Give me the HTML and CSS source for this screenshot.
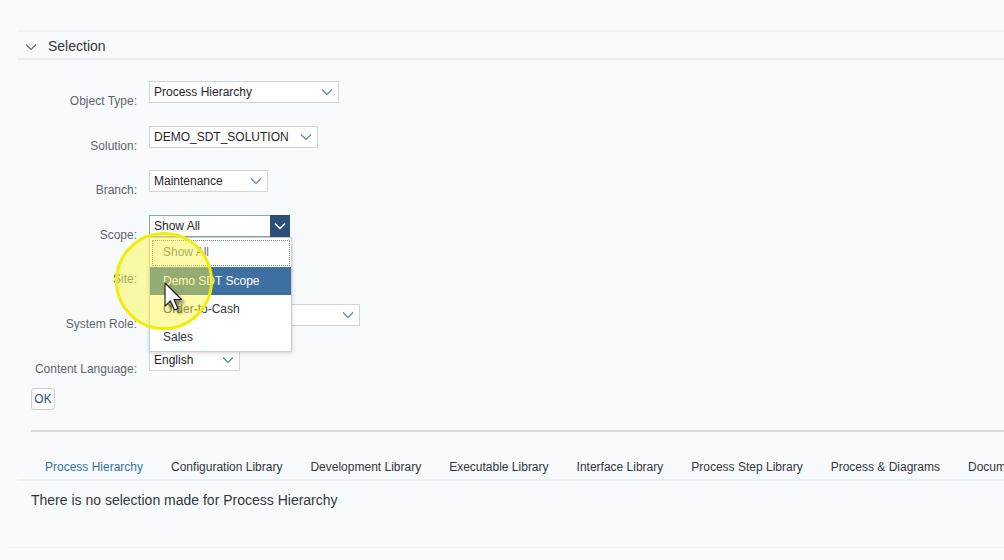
FILE: index.html
```html
<!DOCTYPE html>
<html>
<head>
<meta charset="utf-8">
<link rel="stylesheet" href="styles.css">
</head>
<body>
<div class="topstrip"></div>
<div class="panel">
  <div class="sec-header">
    <svg class="sec-chev" width="12" height="8" viewBox="0 0 12 8"><path d="M1 1.5 L6 6.5 L11 1.5" fill="none" stroke="#5b6b7c" stroke-width="1.1"/></svg>
    <span>Selection</span>
  </div>
  <div class="form">
    <div class="row">
      <label class="lbl">Object Type:</label>
      <div class="field w190"><span>Process Hierarchy</span><svg class="chev" width="12" height="8" viewBox="0 0 12 8"><path d="M1 1.5 L6 6.5 L11 1.5" fill="none" stroke="#5a7ea8" stroke-width="1.1"/></svg></div>
    </div>
    <div class="row">
      <label class="lbl">Solution:</label>
      <div class="field w169"><span>DEMO_SDT_SOLUTION</span><svg class="chev" width="12" height="8" viewBox="0 0 12 8"><path d="M1 1.5 L6 6.5 L11 1.5" fill="none" stroke="#5a7ea8" stroke-width="1.1"/></svg></div>
    </div>
    <div class="row">
      <label class="lbl">Branch:</label>
      <div class="field w119"><span>Maintenance</span><svg class="chev" width="12" height="8" viewBox="0 0 12 8"><path d="M1 1.5 L6 6.5 L11 1.5" fill="none" stroke="#5a7ea8" stroke-width="1.1"/></svg></div>
    </div>
    <div class="row">
      <label class="lbl">Scope:</label>
      <div class="field w141 focus"><span>Show All</span><div class="arrowbtn"><svg width="12" height="8" viewBox="0 0 12 8"><path d="M1 1.5 L6 6.5 L11 1.5" fill="none" stroke="#ffffff" stroke-width="1.4"/></svg></div>
        <ul class="listbox">
          <li class="opt focused">Show All</li>
          <li class="opt selected">Demo SDT Scope</li>
          <li class="opt">Order-to-Cash</li>
          <li class="opt">Sales</li>
        </ul>
      </div>
    </div>
    <div class="row">
      <label class="lbl">Site:</label>
      <div class="field w141"><span></span></div>
    </div>
    <div class="row">
      <label class="lbl">System Role:</label>
      <div class="field w211"><span></span><svg class="chev" width="12" height="8" viewBox="0 0 12 8"><path d="M1 1.5 L6 6.5 L11 1.5" fill="none" stroke="#5a7ea8" stroke-width="1.1"/></svg></div>
    </div>
    <div class="row">
      <label class="lbl">Content Language:</label>
      <div class="field w91"><span>English</span><svg class="chev" width="12" height="8" viewBox="0 0 12 8"><path d="M1 1.5 L6 6.5 L11 1.5" fill="none" stroke="#5a7ea8" stroke-width="1.1"/></svg></div>
    </div>
    <div class="btnrow"><button class="ok">OK</button></div>
  </div>
  <div class="sep"></div>
  <div class="tabs">
    <div class="tab active">Process Hierarchy</div>
    <div class="tab">Configuration Library</div>
    <div class="tab">Development Library</div>
    <div class="tab">Executable Library</div>
    <div class="tab">Interface Library</div>
    <div class="tab">Process Step Library</div>
    <div class="tab">Process &amp; Diagrams</div>
    <div class="tab">Documents</div>
  </div>
  <div class="msg">There is no selection made for Process Hierarchy</div>
</div>
<div class="bottomline"></div>

<div class="spot"></div>
<svg class="cursor" width="26" height="34" viewBox="0 0 26 34">
  <defs><filter id="sh" x="-50%" y="-50%" width="200%" height="200%"><feGaussianBlur stdDeviation="1.6"/></filter></defs>
  <path d="M4 3 L4 26 L9.5 21 L13.5 30 L17 28.5 L13 19.5 L20.5 19.5 Z" fill="#000" opacity="0.45" filter="url(#sh)" transform="translate(2,2)"/>
  <path d="M2 1 L2 24 L7.5 19 L11.5 28 L15 26.5 L11 17.5 L18.5 17.5 Z" fill="#ffffff" stroke="#222" stroke-width="1.2" stroke-linejoin="round"/>
</svg>
</body>
</html>
```

FILE: styles.css
```css
* { box-sizing: border-box; }
html, body { margin: 0; padding: 0; }
body {
  width: 1004px;
  height: 560px;
  overflow: hidden;
  background: #f8fbfd;
  font-family: "Liberation Sans", Arial, sans-serif;
  color: #32363a;
  position: relative;
}
.topstrip {
  height: 32px;
  margin-left: 17px;
  border-bottom: 2px solid #eef1f5;
}
.panel {
  margin-left: 17px;
}
.sec-header {
  height: 28px;
  display: flex;
  align-items: center;
  border-bottom: 2px solid #e6edf5;
  padding-left: 8px;
  padding-top: 2px;
}
.sec-chev { margin-right: 11px; margin-top: 2px; }
.sec-header span { font-size: 14px; color: #32363a; }

.form {
  padding-top: 21px;
  display: flex;
  flex-direction: column;
  gap: 22.6px;
}
.row {
  display: flex;
  height: 22px;
  align-items: flex-start;
}
.lbl {
  width: 120px;
  text-align: right;
  font-size: 12px;
  color: #5c6670;
  padding-top: 13px;
  white-space: nowrap;
}
.field {
  margin-left: 12px;
  height: 22px;
  background: #ffffff;
  border: 1px solid #cfd5db;
  display: flex;
  align-items: center;
  justify-content: space-between;
  padding-left: 4px;
  padding-right: 5px;
  font-size: 12px;
  color: #1f2428;
  position: relative;
}
.w190 { width: 190px; }
.w169 { width: 169px; }
.w119 { width: 119px; }
.w141 { width: 141px; }
.w211 { width: 211px; }
.w91 { width: 91px; }
.field.focus {
  border-color: #8ea3ba;
  padding-right: 0;
}
.arrowbtn {
  width: 20px;
  height: 22px;
  margin-right: -1px;
  background: #2d4f77;
  display: flex;
  align-items: center;
  justify-content: center;
}
.listbox {
  position: absolute;
  left: -1px;
  top: 21px;
  width: 143px;
  margin: 0;
  padding: 1px 0 0;
  list-style: none;
  background: #ffffff;
  border: 1px solid #c9ced3;
  box-shadow: 0 1px 4px rgba(0,0,0,0.18);
  z-index: 5;
}
.opt {
  height: 28px;
  line-height: 28px;
  padding-left: 13px;
  font-size: 12px;
  color: #32363a;
}
.opt.focused {
  height: 26px;
  line-height: 23px;
  margin: 1px 1px 1px 2px;
  border: 1px dotted #8a8a8a;
  padding-left: 10px;
  color: #6b6f73;
}
.opt.selected {
  background: #3f70a3;
  color: #ffffff;
}
.btnrow { margin-top: -5px; padding-left: 14px; }
.ok {
  width: 24px;
  height: 22px;
  padding: 0;
  background: #ffffff;
  border: 1px solid #c9d0d7;
  border-radius: 3px;
  font-family: inherit;
  font-size: 12px;
  color: #2d4f77;
}
.sep {
  margin-top: 20px;
  margin-left: 14px;
  height: 2px;
  background: #d6dce2;
}
.tabs {
  margin-top: 22px;
  display: flex;
  padding-left: 14px;
  border-bottom: 2px solid #e8eef5;
  white-space: nowrap;
  overflow: hidden;
}
.tab {
  margin: 0 14px;
  font-size: 12px;
  color: #32363a;
  padding-bottom: 4px;
  border-bottom: 2px solid transparent;
  margin-bottom: -2px;
  height: 27px;
  line-height: 18px;
  padding-top: 4px;
}
.tab.active {
  color: #3b6ea3;
  border-bottom-color: #3b6ea3;
}
.msg {
  padding-left: 14px;
  padding-top: 11px;
  font-size: 14px;
  color: #32363a;
}
.bottomline {
  position: absolute;
  left: 8px;
  right: 0;
  top: 547px;
  height: 1px;
  background: #edf1f5;
}
.spot {
  position: absolute;
  left: 115px;
  top: 232px;
  width: 98px;
  height: 98px;
  border-radius: 50%;
  border: 3px solid #f0ec10;
  background: rgba(250, 246, 60, 0.45);
  z-index: 10;
}
.cursor {
  position: absolute;
  left: 163px;
  top: 282px;
  z-index: 11;
}
```
